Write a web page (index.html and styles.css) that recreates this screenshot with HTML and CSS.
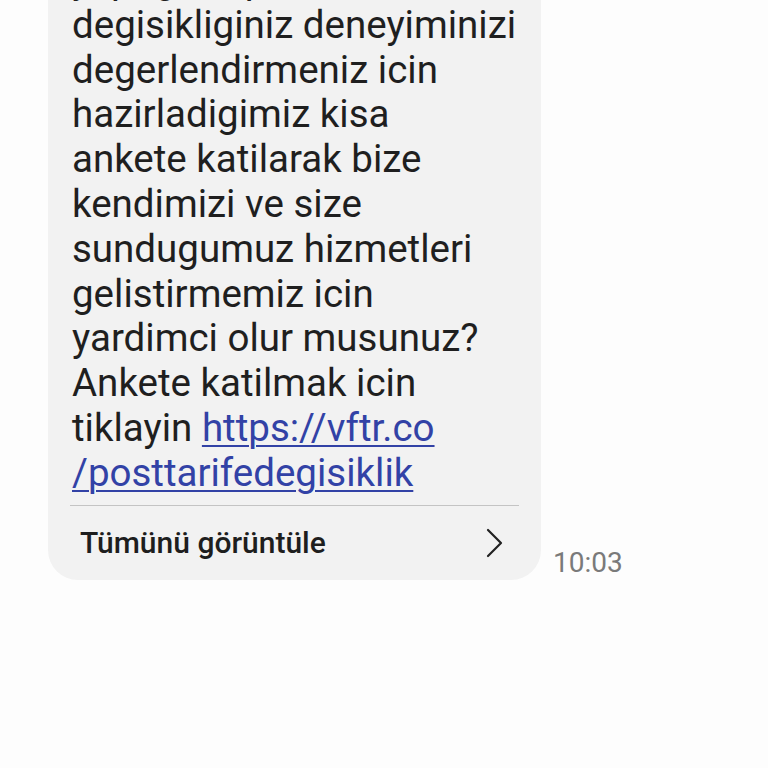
FILE: index.html
```html
<!DOCTYPE html>
<html lang="tr">
<head>
    <meta charset="UTF-8">
    <meta name="viewport" content="width=device-width, initial-scale=1.0">
    <title>Mesaj</title>
    <link rel="stylesheet" href="styles.css">
</head>
<body>
    <div class="thread">
        <div class="message-row">
            <div class="bubble">
                <p class="bubble-text">
                    yaptiginiz paket<br>
                    degisikliginiz deneyiminizi<br>
                    degerlendirmeniz icin<br>
                    hazirladigimiz kisa<br>
                    ankete katilarak bize<br>
                    kendimizi ve size<br>
                    sundugumuz hizmetleri<br>
                    gelistirmemiz icin<br>
                    yardimci olur musunuz?<br>
                    Ankete katilmak icin<br>
                    tiklayin <a href="#" class="bubble-link">https://vftr.co<br>/posttarifedegisiklik</a>
                </p>
                <div class="bubble-footer">
                    <span class="view-all">Tümünü görüntüle</span>
                    <svg class="chevron" width="18" height="30" viewBox="0 0 18 30">
                        <path d="M3 2 L16 15 L3 28" fill="none" stroke="#222" stroke-width="2.2" stroke-linecap="round" stroke-linejoin="round"/>
                    </svg>
                </div>
            </div>
            <span class="time">10:03</span>
        </div>
    </div>
</body>
</html>
```

FILE: styles.css
```css
* {
    margin: 0;
    padding: 0;
    box-sizing: border-box;
}

body {
    background-color: #fdfdfd;
    font-family: Roboto, "Noto Sans", sans-serif;
    color: #1f1f1f;
    height: 768px;
    overflow: hidden;
}

/* Message thread */
.thread {
    padding-left: 48px;
}

.message-row {
    display: flex;
    align-items: flex-end;
    gap: 12px;
    margin-top: -46px;
}

.bubble {
    width: 493px;
    background-color: #f2f2f2;
    border-radius: 0 0 30px 30px;
}

.bubble-text {
    padding: 4px 0 9px 24px;
    font-size: 38.5px;
    line-height: 44.8px;
    white-space: nowrap;
}

.bubble-link {
    color: #3242a6;
    text-decoration: underline;
    text-decoration-thickness: 2px;
    text-underline-offset: 4px;
}

/* Footer with "view all" */
.bubble-footer {
    margin: 0 22px;
    border-top: 1.5px solid #c4c4c4;
    height: 75px;
    display: flex;
    align-items: center;
    justify-content: space-between;
    padding: 0 16px 0 10px;
}

.view-all {
    font-size: 30px;
    font-weight: 500;
    color: #1e1e1e;
}

.chevron {
    display: block;
}

.time {
    font-size: 28px;
    color: #7a7a7a;
    padding-bottom: 1px;
}
```
